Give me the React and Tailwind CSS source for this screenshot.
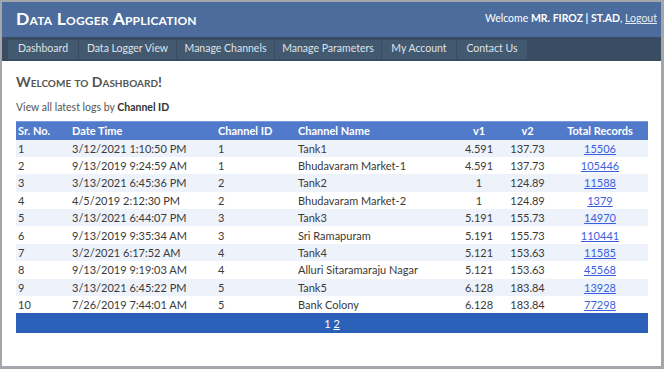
const navItems = [
  { label: "Dashboard", w: "w-[70px]" },
  { label: "Data Logger View", w: "w-[97px]" },
  { label: "Manage Channels", w: "w-[97px]" },
  { label: "Manage Parameters", w: "w-[106px]" },
  { label: "My Account", w: "w-[74px]" },
  { label: "Contact Us", w: "w-[70px]" },
];

const logs = [
  [1, "3/12/2021 1:10:50 PM", 1, "Tank1", "4.591", "137.73", "15506"],
  [2, "9/13/2019 9:24:59 AM", 1, "Bhudavaram Market-1", "4.591", "137.73", "105446"],
  [3, "3/13/2021 6:45:36 PM", 2, "Tank2", "1", "124.89", "11588"],
  [4, "4/5/2019 2:12:30 PM", 2, "Bhudavaram Market-2", "1", "124.89", "1379"],
  [5, "3/13/2021 6:44:07 PM", 3, "Tank3", "5.191", "155.73", "14970"],
  [6, "9/13/2019 9:35:34 AM", 3, "Sri Ramapuram", "5.191", "155.73", "110441"],
  [7, "3/2/2021 6:17:52 AM", 4, "Tank4", "5.121", "153.63", "11585"],
  [8, "9/13/2019 9:19:03 AM", 4, "Alluri Sitaramaraju Nagar", "5.121", "153.63", "45568"],
  [9, "3/13/2021 6:45:22 PM", 5, "Tank5", "6.128", "183.84", "13928"],
  [10, "7/26/2019 7:44:01 AM", 5, "Bank Colony", "6.128", "183.84", "77298"],
];

export default function App() {
  return (
    <div
      className="w-[664px] h-[369px] bg-[#a3a7ab] pt-[2px] pl-[2px] pr-[3px] pb-[3px] text-[11px] text-[#3a3a3a]"
      style={{ fontFamily: "'Segoe UI', Lato, 'Open Sans', sans-serif" }}
    >
      <div className="h-full bg-white flex flex-col">
        {/* Header */}
        <div className="h-[35px] shrink-0 bg-[#4b6c9d] flex items-center justify-between pl-[14px] pr-[4px]">
          <h1 className="text-white font-bold text-[17.5px] tracking-[0.2px] [font-variant:small-caps] leading-none pb-[2px]">
            Data Logger Application
          </h1>
          <div className="text-white text-[10.5px] self-start mt-[9px]">
            Welcome <b>MR. FIROZ | ST.AD</b>, <a className="underline text-[#e8ecf2]">Logout</a>
          </div>
        </div>

        {/* Nav */}
        <div className="h-[24px] shrink-0 bg-[#394c61] flex items-center pl-[6px] gap-[1px]">
          {navItems.map((n) => (
            <div
              key={n.label}
              className={`${n.w} h-[19px] bg-[#435970] text-[#dde3ea] text-[10.5px] flex items-center justify-center`}
            >
              {n.label}
            </div>
          ))}
        </div>

        {/* Content */}
        <div className="px-[14px] pt-[14px]">
          <h2 className="text-[14px] font-bold text-[#555] [font-variant:small-caps] leading-none">
            Welcome to Dashboard!
          </h2>
          <p className="mt-[11px] text-[#555] text-[10.5px] leading-[14px]">
            View all latest logs by <b className="text-[#333]">Channel ID</b>
          </p>

          <table className="mt-[7px] w-[632px] border-collapse table-fixed">
            <colgroup>
              <col className="w-[54px]" />
              <col className="w-[146px]" />
              <col className="w-[80px]" />
              <col className="w-[159px]" />
              <col className="w-[48px]" />
              <col className="w-[49px]" />
              <col className="w-[96px]" />
            </colgroup>
            <thead>
              <tr className="bg-[#517acb] text-white h-[18px] border-t border-[#7a9ae0]">
                <th className="text-left font-bold pl-[2px] leading-none">Sr. No.</th>
                <th className="text-left font-bold pl-[2px] leading-none">Date Time</th>
                <th className="text-left font-bold pl-[2px] leading-none">Channel ID</th>
                <th className="text-left font-bold pl-[2px] leading-none">Channel Name</th>
                <th className="text-center font-bold leading-none">v1</th>
                <th className="text-center font-bold leading-none">v2</th>
                <th className="text-center font-bold leading-none">Total Records</th>
              </tr>
            </thead>
            <tbody>
              {logs.map((r, i) => (
                <tr
                  key={r[0]}
                  className={`h-[17.4px] ${i % 2 === 0 ? "bg-[#eef2fb]" : "bg-white"}`}
                >
                  <td className="pl-[2px] leading-none">{r[0]}</td>
                  <td className="pl-[2px] leading-none">{r[1]}</td>
                  <td className="pl-[2px] leading-none">{r[2]}</td>
                  <td className="pl-[2px] leading-none">{r[3]}</td>
                  <td className="text-center leading-none">{r[4]}</td>
                  <td className="text-center leading-none">{r[5]}</td>
                  <td className="text-center leading-none">
                    <a className="text-[#3a5fe0] underline">{r[6]}</a>
                  </td>
                </tr>
              ))}
              <tr className="h-[20px] bg-[#2a60b8] text-white">
                <td colSpan={7} className="text-center leading-none">
                  1 <a className="underline">2</a>
                </td>
              </tr>
            </tbody>
          </table>
        </div>
      </div>
    </div>
  );
}
